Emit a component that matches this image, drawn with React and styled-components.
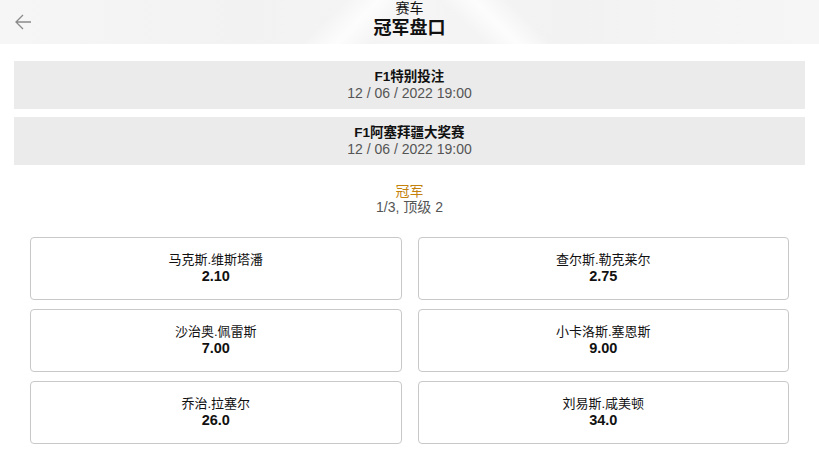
import React from 'react'
import styled, { createGlobalStyle } from 'styled-components'

const GlobalStyle = createGlobalStyle`
  html, body {
    margin: 0;
    padding: 0;
    background: #fff;
    font-family: "Liberation Sans", Arial, "Noto Sans CJK SC", sans-serif;
    color: #111;
  }
`

const Header = styled.header`
  position: relative;
  height: 44px;
  display: flex;
  flex-direction: column;
  align-items: center;
  justify-content: flex-start;
  background:
    linear-gradient(135deg, transparent 40%, rgba(255,255,255,0.8) 44%, transparent 48%),
    linear-gradient(45deg, transparent 56%, rgba(255,255,255,0.8) 60%, transparent 64%),
    linear-gradient(90deg, #f6f6f6 0%, #f2f2f2 30%, #f5f5f5 50%, #f2f2f2 70%, #f6f6f6 100%);
`

const BackButton = styled.button`
  position: absolute;
  left: 12px;
  top: 11px;
  width: 22px;
  height: 22px;
  padding: 0;
  border: 0;
  background: none;
  display: flex;
  align-items: center;
  justify-content: center;
`

const SubTitle = styled.div`
  font-size: 14px;
  line-height: 16px;
`

const Title = styled.h1`
  margin: 1px 0 0;
  font-size: 18px;
  line-height: 22px;
  font-weight: 700;
`

const Main = styled.main`
  display: flex;
  flex-direction: column;
  padding-top: 17px;
`

const Banner = styled.section`
  margin: 0 14px 8px;
  background: #ebebeb;
  height: 48px;
  display: flex;
  flex-direction: column;
  align-items: center;
  justify-content: center;
`

const BannerTitle = styled.div`
  font-size: 13.5px;
  line-height: 16px;
  font-weight: 700;
`

const DateText = styled.div`
  font-size: 14px;
  line-height: 16px;
  color: #555;
`

const Market = styled.div`
  display: flex;
  flex-direction: column;
  align-items: center;
  margin-top: 10px;
`

const MarketName = styled.div`
  font-size: 14px;
  line-height: 16px;
  color: #c4810c;
`

const MarketInfo = styled.div`
  font-size: 14px;
  line-height: 16px;
  color: #555;
`

const Grid = styled.div`
  display: grid;
  grid-template-columns: 1fr 1fr;
  column-gap: 16px;
  row-gap: 9px;
  padding: 22px 30px 0;
`

const Card = styled.button`
  height: 63px;
  box-sizing: border-box;
  border: 1px solid #c8c8c8;
  border-radius: 4px;
  background: #fff;
  display: flex;
  flex-direction: column;
  align-items: center;
  justify-content: center;
  font-family: inherit;
  color: #111;
  padding: 0;
`

const Name = styled.span`
  font-size: 13px;
  line-height: 16px;
`

const Odds = styled.span`
  font-size: 14.5px;
  line-height: 17px;
  font-weight: 700;
`

const events = [
  { title: 'F1特别投注', date: '12 / 06 / 2022 19:00' },
  { title: 'F1阿塞拜疆大奖赛', date: '12 / 06 / 2022 19:00' }
]

const runners = [
  { name: '马克斯.维斯塔潘', odds: '2.10' },
  { name: '查尔斯.勒克莱尔', odds: '2.75' },
  { name: '沙治奥.佩雷斯', odds: '7.00' },
  { name: '小卡洛斯.塞恩斯', odds: '9.00' },
  { name: '乔治.拉塞尔', odds: '26.0' },
  { name: '刘易斯.咸美顿', odds: '34.0' }
]

const App = () => {
  return (
    <>
      <GlobalStyle />
      <Header>
        <BackButton aria-label='back'>
          <svg width='18' height='18' viewBox='0 0 18 18' fill='none' stroke='#8a8a8a' strokeWidth='1.3'>
            <path d='M17 9H2M9 2L2 9l7 7' />
          </svg>
        </BackButton>
        <SubTitle>赛车</SubTitle>
        <Title>冠军盘口</Title>
      </Header>
      <Main>
        {events.map(e => (
          <Banner key={e.title}>
            <BannerTitle>{e.title}</BannerTitle>
            <DateText>{e.date}</DateText>
          </Banner>
        ))}
        <Market>
          <MarketName>冠军</MarketName>
          <MarketInfo>1/3, 顶级 2</MarketInfo>
        </Market>
        <Grid>
          {runners.map(r => (
            <Card key={r.name}>
              <Name>{r.name}</Name>
              <Odds>{r.odds}</Odds>
            </Card>
          ))}
        </Grid>
      </Main>
    </>
  )
}

export default App
